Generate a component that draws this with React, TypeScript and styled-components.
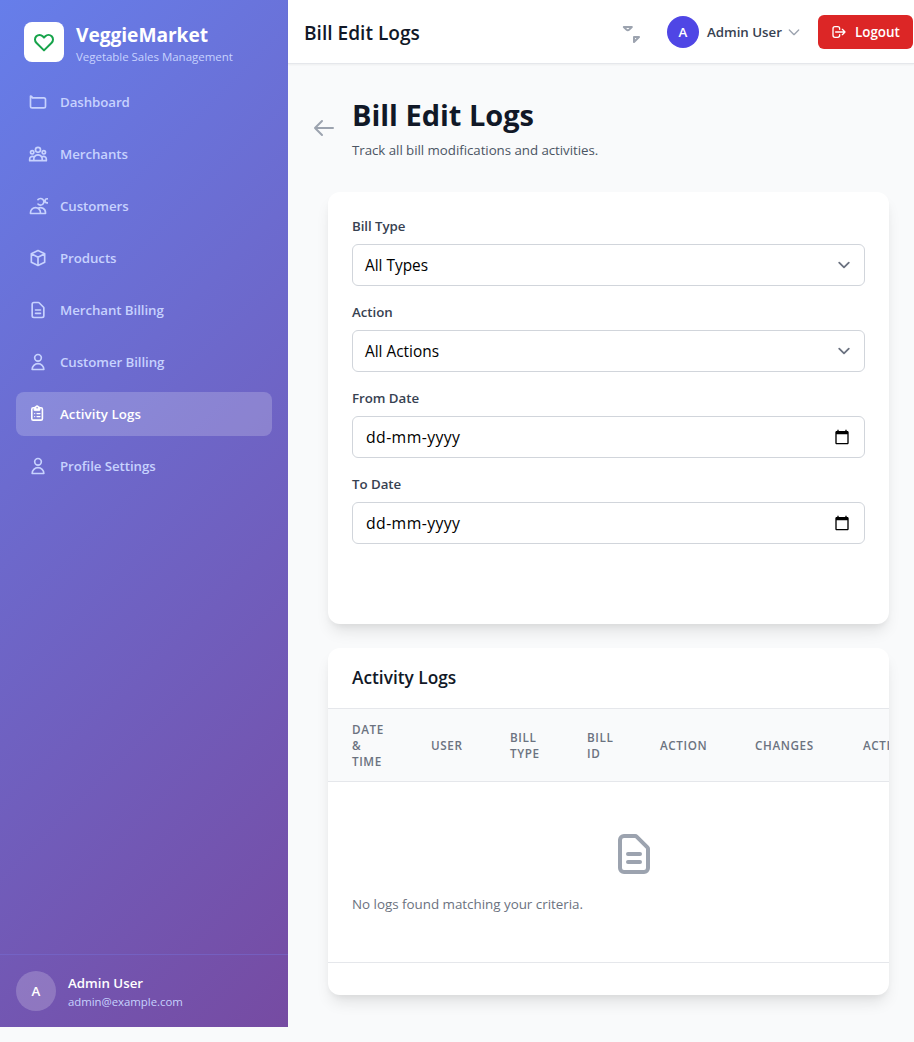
import React from "react";
import styled, { createGlobalStyle } from "styled-components";

const GlobalStyle = createGlobalStyle`
  *, *::before, *::after { box-sizing: border-box; }
  body {
    margin: 0;
    background: #f9fafb;
    font-family: "Segoe UI", "Open Sans", "Noto Sans", sans-serif;
    color: #111827;
    overflow: hidden;
  }
  h1, h2, h3, p { margin: 0; }
`;

const Page = styled.div`
  display: flex;
  align-items: flex-start;
  width: 914px;
  height: 1042px;
  overflow: hidden;
`;

const Sidebar = styled.aside`
  display: flex;
  flex-direction: column;
  flex: none;
  width: 288px;
  height: 1027px;
  background: linear-gradient(135deg, #667eea 0%, #764ba2 100%);
`;

const Brand = styled.div`
  display: flex;
  align-items: center;
  gap: 12px;
  height: 64px;
  padding: 20px 24px 0;
`;

const BrandMark = styled.div`
  display: flex;
  align-items: center;
  justify-content: center;
  width: 40px;
  height: 40px;
  border-radius: 8px;
  background: #fff;
  color: #16a34a;
`;

const BrandName = styled.h1`
  padding-top: 2px;
  font-size: 19.2px;
  line-height: 28px;
  font-weight: 700;
  letter-spacing: -0.05px;
  color: #fff;
`;

const BrandTagline = styled.p`
  font-size: 11.5px;
  line-height: 16px;
  letter-spacing: -0.03px;
  color: #c7d2fe;
`;

const Nav = styled.nav`
  display: flex;
  flex-direction: column;
  flex: 1;
  gap: 8px;
  padding: 16px;
`;

const NavItem = styled.a<{ $active?: boolean }>`
  display: flex;
  align-items: center;
  gap: 12px;
  height: 44px;
  padding: 0 12px;
  border-radius: 8px;
  font-size: 13.3px;
  line-height: 20px;
  font-weight: 600;
  letter-spacing: ${(p) => (p.$active ? "0.06px" : "-0.08px")};
  color: ${(p) => (p.$active ? "#fff" : "#c7d2fe")};
  background: ${(p) => (p.$active ? "rgba(255, 255, 255, 0.2)" : "transparent")};
`;

const SidebarFooter = styled.div`
  display: flex;
  align-items: center;
  gap: 12px;
  padding: 16px;
  border-top: 1px solid rgba(118, 110, 214, 0.5);
  background-clip: padding-box;
`;

const Avatar = styled.div<{ $size: number; $bg: string; $text: number }>`
  display: flex;
  align-items: center;
  justify-content: center;
  flex: none;
  width: ${(p) => p.$size}px;
  height: ${(p) => p.$size}px;
  border-radius: 50%;
  background: ${(p) => p.$bg};
  color: #fff;
  font-size: ${(p) => p.$text}px;
  font-weight: 600;
`;

const FooterName = styled.p`
  font-size: 13.3px;
  line-height: 20px;
  font-weight: 600;
  color: #fff;
`;

const FooterEmail = styled.p`
  padding-top: 1px;
  margin-bottom: -1px;
  font-size: 11.4px;
  line-height: 16px;
  letter-spacing: -0.03px;
  color: #c7d2fe;
`;

const Main = styled.div`
  flex: 1;
  min-width: 0;
`;

const TopBar = styled.header`
  display: flex;
  align-items: center;
  justify-content: space-between;
  height: 64px;
  padding: 0 1px 0 16px;
  background: #fff;
  border-bottom: 1px solid #e5e7eb;
  box-shadow: 0 1px 2px rgba(0, 0, 0, 0.05);
`;

const TopTitle = styled.h2`
  font-size: 19.1px;
  line-height: 28px;
  font-weight: 600;
  padding-top: 2px;
`;

const TopActions = styled.div`
  display: flex;
  align-items: center;
  padding-top: 1px;
`;

const BellIcon = styled.span`
  display: flex;
  margin-right: 24px;
  color: #9ca3af;
`;

const UserMenu = styled.div`
  display: flex;
  align-items: center;
  gap: 8px;
  margin-right: 16px;
`;

const UserName = styled.span`
  font-size: 13.3px;
  line-height: 20px;
  font-weight: 600;
  color: #374151;
`;

const Caret = styled.span`
  display: flex;
  margin-left: -4px;
  color: #9ca3af;
`;

const LogoutButton = styled.button`
  display: flex;
  align-items: center;
  gap: 8px;
  width: 95px;
  height: 34px;
  padding: 0 12px 0 13px;
  border: 0;
  border-radius: 6px;
  background: #dc2626;
  color: #fff;
  font-family: inherit;
  font-size: 13.4px;
  line-height: 20px;
  font-weight: 600;
`;

const Content = styled.main`
  display: flex;
  flex-direction: column;
  padding: 32px 25px 0 40px;
`;

const PageHeader = styled.div`
  display: flex;
  align-items: center;
  gap: 16px;
  margin: 0 0 32px -16px;
  color: #9ca3af;
`;

const PageTitle = styled.h1`
  font-size: 29px;
  line-height: 36px;
  padding-top: 1px;
  font-weight: 700;
  letter-spacing: -0.02px;
  color: #111827;
`;

const PageSubtitle = styled.p`
  margin-top: 7px;
  font-size: 13.3px;
  line-height: 20px;
  letter-spacing: -0.04px;
  color: #4b5563;
`;

const Card = styled.section`
  border-radius: 12px;
  background: #fff;
  box-shadow: 0 10px 15px -3px rgba(0, 0, 0, 0.1), 0 4px 6px -2px rgba(0, 0, 0, 0.05);
`;

const FilterCard = styled(Card)`
  display: flex;
  flex-direction: column;
  gap: 16px;
  height: 432px;
  padding: 24px;
  margin-bottom: 24px;
`;

const Field = styled.div`
  display: flex;
  flex-direction: column;
  gap: 8px;
`;

const FieldLabel = styled.label`
  font-size: 13.3px;
  line-height: 20px;
  font-weight: 600;
  letter-spacing: -0.05px;
  color: #374151;
`;

const Control = styled.div<{ $date?: boolean }>`
  display: flex;
  align-items: center;
  justify-content: space-between;
  height: 42px;
  padding: ${(p) => (p.$date ? "0 14px 0 13px" : "0 8px 0 12px")};
  border: 1px solid #d1d5db;
  border-radius: 6px;
  background: #fff;
  color: #000;
  font-size: ${(p) => (p.$date ? "15.8px" : "15.4px")};
  letter-spacing: ${(p) => (p.$date ? "0.4px" : "0")};
  line-height: 24px;
`;

const ControlValue = styled.span<{ $date?: boolean }>`
  padding-top: ${(p) => (p.$date ? "0" : "2px")};
`;

const LogsCard = styled(Card)`
  height: 347px;
  overflow: hidden;
`;

const LogsTitle = styled.h3`
  height: 61px;
  padding: 16px 24px 0;
  border-bottom: 1px solid #e5e7eb;
  font-size: 17.3px;
  line-height: 28px;
  font-weight: 600;
`;

const Table = styled.table`
  width: 612px;
  table-layout: fixed;
  border-collapse: separate;
  border-spacing: 0;
`;

const HeadCell = styled.th<{ $w: number }>`
  width: ${(p) => p.$w}px;
  height: 73px;
  padding: 0 24px;
  background: #f9fafb;
  border-bottom: 1px solid #e5e7eb;
  text-align: left;
  vertical-align: middle;
  font-size: 11.7px;
  line-height: 16px;
  font-weight: 600;
  letter-spacing: 0.6px;
  text-transform: uppercase;
  color: #6b7280;
`;

const EmptyCell = styled.td`
  height: 181px;
  padding: 48px 24px;
  border-bottom: 1px solid #e5e7eb;
  vertical-align: top;
  color: #9ca3af;

  svg { display: block; margin: 0 auto 16px; }
`;

const EmptyText = styled.p`
  font-size: 13.4px;
  line-height: 20px;
  letter-spacing: -0.02px;
  color: #6b7280;
`;

const icons = {
  heart: "M4.318 6.318a4.5 4.5 0 000 6.364L12 20.364l7.682-7.682a4.5 4.5 0 00-6.364-6.364L12 7.636l-1.318-1.318a4.5 4.5 0 00-6.364 0z",
  folder: "M3 7v10a2 2 0 002 2h14a2 2 0 002-2V9a2 2 0 00-2-2H5a2 2 0 00-2-2z",
  group: "M17 20h5v-2a3 3 0 00-5.356-1.857M17 20H7m10 0v-2c0-.656-.126-1.283-.356-1.857M7 20H2v-2a3 3 0 015.356-1.857M7 20v-2c0-.656.126-1.283.356-1.857m0 0a5.002 5.002 0 019.288 0M15 7a3 3 0 11-6 0 3 3 0 016 0zm6 3a2 2 0 11-4 0 2 2 0 014 0zM7 10a2 2 0 11-4 0 2 2 0 014 0z",
  customers: "M12 4.354a4 4 0 110 5.292M15 21H3v-1a6 6 0 0112 0v1zm0 0h6v-1a6 6 0 00-9-5.197m13.5-9a2.5 2.5 0 11-5 0 2.5 2.5 0 015 0z",
  cube: "M20 7l-8-4-8 4m16 0l-8 4m8-4v10l-8 4m0-10L4 7m8 4v10M4 7v10l8 4",
  document: "M9 12h6m-6 4h6m2 5H7a2 2 0 01-2-2V5a2 2 0 012-2h5.586a1 1 0 01.707.293l5.414 5.414a1 1 0 01.293.707V19a2 2 0 01-2 2z",
  user: "M16 7a4 4 0 11-8 0 4 4 0 018 0zM12 14a7 7 0 00-7 7h14a7 7 0 00-7-7z",
  bell: "M15 17h5l-5 5v-5zM4.828 7l2.586 2.586a2 2 0 002.828 0L12.828 7H4.828z",
  arrowLeft: "M10 19l-7-7m0 0l7-7m-7 7h18",
  chevron: "M19 9l-7 7-7-7",
  logout: "M17 16l4-4m0 0l-4-4m4 4H7m6 4v1a3 3 0 01-3 3H6a3 3 0 01-3-3V7a3 3 0 013-3h4a3 3 0 013 3v1",
};

function Icon({ name, size }: { name: keyof typeof icons; size: number }) {
  return (
    <svg width={size} height={size} viewBox="0 0 24 24" fill="none" stroke="currentColor" strokeWidth={2} strokeLinecap="round" strokeLinejoin="round">
      <path d={icons[name]} />
    </svg>
  );
}

function ClipboardIcon() {
  return (
    <svg width={20} height={20} viewBox="0 0 20 20" fill="none" stroke="currentColor" strokeLinecap="round" strokeLinejoin="round">
      <rect x="3.8" y="3.8" width="10.6" height="12.3" rx="1.4" strokeWidth="1.6" />
      <path d="M6.2 6V3.2h1a1.95 1.95 0 013.8 0h1V6a.6.6 0 01-.6.6H6.8a.6.6 0 01-.6-.6z" fill="currentColor" strokeWidth="0.9" />
      <circle cx="9.1" cy="3.7" r="0.8" fill="#8b85d6" stroke="none" />
      <path d="M9 9.6h3M9 12.6h3M6.6 9.6h.1M6.6 12.6h.1" strokeWidth="1.2" />
    </svg>
  );
}

function SelectChevron() {
  return (
    <svg width={24} height={24} viewBox="0 0 20 20" fill="none" stroke="#6b7280" strokeWidth={1.5} strokeLinecap="round" strokeLinejoin="round">
      <path d="M6 8l4 4 4-4" />
    </svg>
  );
}

function CalendarIcon() {
  return (
    <svg width={16} height={16} viewBox="0 0 24 24" fill="#000">
      <path d="M20 3h-1V1h-2v2H7V1H5v2H4c-1.1 0-2 .9-2 2v16c0 1.1.9 2 2 2h16c1.1 0 2-.9 2-2V5c0-1.1-.9-2-2-2zm0 18H4V8h16v13z" />
    </svg>
  );
}

const navItems: { label: string; icon: keyof typeof icons | "clipboard"; active?: boolean }[] = [
  { label: "Dashboard", icon: "folder" },
  { label: "Merchants", icon: "group" },
  { label: "Customers", icon: "customers" },
  { label: "Products", icon: "cube" },
  { label: "Merchant Billing", icon: "document" },
  { label: "Customer Billing", icon: "user" },
  { label: "Activity Logs", icon: "clipboard", active: true },
  { label: "Profile Settings", icon: "user" },
];

const filters = [
  { label: "Bill Type", value: "All Types" },
  { label: "Action", value: "All Actions" },
  { label: "From Date", value: "dd-mm-yyyy", date: true },
  { label: "To Date", value: "dd-mm-yyyy", date: true },
];

const columns: [string, number][] = [
  ["Date & Time", 79],
  ["User", 79],
  ["Bill Type", 77],
  ["Bill ID", 73],
  ["Action", 95],
  ["Changes", 108],
  ["Actions", 101],
];

export default function App() {
  return (
    <>
      <GlobalStyle />
      <Page>
        <Sidebar>
          <Brand>
            <BrandMark><Icon name="heart" size={24} /></BrandMark>
            <div>
              <BrandName>VeggieMarket</BrandName>
              <BrandTagline>Vegetable Sales Management</BrandTagline>
            </div>
          </Brand>
          <Nav>
            {navItems.map((item) => (
              <NavItem key={item.label} $active={item.active}>
                {item.icon === "clipboard" ? <ClipboardIcon /> : <Icon name={item.icon} size={20} />}
                {item.label}
              </NavItem>
            ))}
          </Nav>
          <SidebarFooter>
            <Avatar $size={40} $bg="rgba(255, 255, 255, 0.2)" $text={13.3}>A</Avatar>
            <div>
              <FooterName>Admin User</FooterName>
              <FooterEmail>admin@example.com</FooterEmail>
            </div>
          </SidebarFooter>
        </Sidebar>
        <Main>
          <TopBar>
            <TopTitle>Bill Edit Logs</TopTitle>
            <TopActions>
              <BellIcon><Icon name="bell" size={24} /></BellIcon>
              <UserMenu>
                <Avatar $size={32} $bg="#4f46e5" $text={13.3}>A</Avatar>
                <UserName>Admin User</UserName>
                <Caret><Icon name="chevron" size={16} /></Caret>
              </UserMenu>
              <LogoutButton><Icon name="logout" size={16} />Logout</LogoutButton>
            </TopActions>
          </TopBar>
          <Content>
            <PageHeader>
              <Icon name="arrowLeft" size={24} />
              <div>
                <PageTitle>Bill Edit Logs</PageTitle>
                <PageSubtitle>Track all bill modifications and activities.</PageSubtitle>
              </div>
            </PageHeader>
            <FilterCard>
              {filters.map((f) => (
                <Field key={f.label}>
                  <FieldLabel>{f.label}</FieldLabel>
                  <Control $date={f.date}>
                    <ControlValue $date={f.date}>{f.value}</ControlValue>
                    {f.date ? <CalendarIcon /> : <SelectChevron />}
                  </Control>
                </Field>
              ))}
            </FilterCard>
            <LogsCard>
              <LogsTitle>Activity Logs</LogsTitle>
              <Table>
                <thead>
                  <tr>
                    {columns.map(([label, w]) => (
                      <HeadCell key={label} $w={w}>{label}</HeadCell>
                    ))}
                  </tr>
                </thead>
                <tbody>
                  <tr>
                    <EmptyCell colSpan={7}>
                      <Icon name="document" size={48} />
                      <EmptyText>No logs found matching your criteria.</EmptyText>
                    </EmptyCell>
                  </tr>
                </tbody>
              </Table>
            </LogsCard>
          </Content>
        </Main>
      </Page>
    </>
  );
}
